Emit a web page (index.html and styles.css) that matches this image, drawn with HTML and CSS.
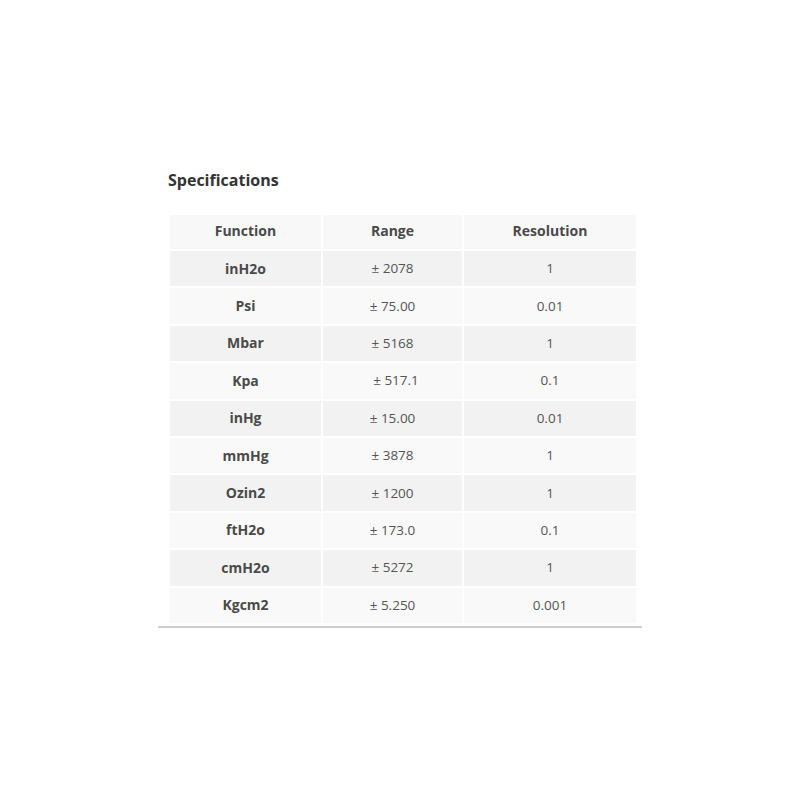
FILE: index.html
```html
<!DOCTYPE html>
<html>
<head>
<meta charset="utf-8">
<link rel="stylesheet" href="styles.css">
</head>
<body>
<div class="spec">
  <h2 class="spec-title">Specifications</h2>
  <table class="spec-table">
    <colgroup>
      <col class="c1"><col class="c2"><col class="c3">
    </colgroup>
    <thead>
      <tr><th>Function</th><th>Range</th><th>Resolution</th></tr>
    </thead>
    <tbody>
      <tr><th>inH2o</th><td>± 2078</td><td>1</td></tr>
      <tr><th>Psi</th><td>± 75.00</td><td>0.01</td></tr>
      <tr><th>Mbar</th><td>± 5168</td><td>1</td></tr>
      <tr><th>Kpa</th><td>&nbsp; ± 517.1</td><td>0.1</td></tr>
      <tr><th>inHg</th><td>± 15.00</td><td>0.01</td></tr>
      <tr><th>mmHg</th><td>± 3878</td><td>1</td></tr>
      <tr><th>Ozin2</th><td>± 1200</td><td>1</td></tr>
      <tr><th>ftH2o</th><td>± 173.0</td><td>0.1</td></tr>
      <tr><th>cmH2o</th><td>± 5272</td><td>1</td></tr>
      <tr><th>Kgcm2</th><td>± 5.250</td><td>0.001</td></tr>
    </tbody>
  </table>
</div>
</body>
</html>
```

FILE: styles.css
```css
html, body {
  margin: 0;
  padding: 0;
  background: #fff;
}
body {
  font-family: "Open Sans", "Noto Sans", sans-serif;
  color: #4a4a4a;
}
.spec {
  width: 470px;
  margin: 0 0 0 158px;
  padding: 167px 4px 0 10px;
  border-bottom: 2px solid #cfcfcf;
}
.spec-title {
  margin: 0 0 20px 0;
  font-size: 16px;
  line-height: 26px;
  font-weight: 700;
  color: #333;
}
.spec-table {
  width: 470px;
  border-collapse: separate;
  border-spacing: 2px;
  table-layout: fixed;
  font-size: 13.5px;
  margin-bottom: 1px;
}
.c1 { width: 151px; }
.c2 { width: 139px; }
.c3 { width: 172px; }
.spec-table th,
.spec-table td {
  padding: 0;
  text-align: center;
  vertical-align: middle;
}
.spec-table th {
  font-size: 14px;
  font-weight: 700;
}
.spec-table thead th {
  height: 34px;
  padding-bottom: 3px;
  box-sizing: border-box;
  background: #f8f8f8;
}
.spec-table tbody th,
.spec-table tbody td {
  height: 35.4px;
  padding-bottom: 1px;
  box-sizing: border-box;
}
.spec-table td { font-weight: 400; color: #555; }
.spec-table tbody tr:nth-child(odd) th,
.spec-table tbody tr:nth-child(odd) td { background: #f2f2f2; }
.spec-table tbody tr:nth-child(even) th,
.spec-table tbody tr:nth-child(even) td { background: #f9f9f9; }
```
